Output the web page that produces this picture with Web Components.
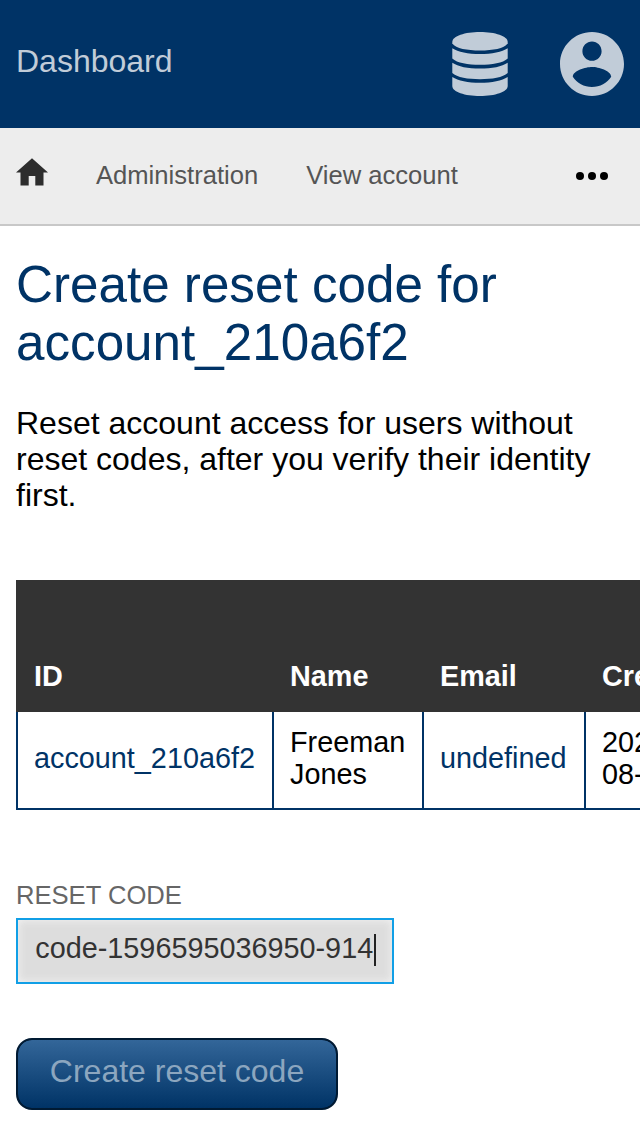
<!DOCTYPE html>
<html lang="en">
<head>
<meta charset="utf-8">
<title>Create reset code</title>
<style>
html,body{margin:0;height:100%}
body{background:#fff;color:#000;font-family:"Liberation Sans",Arial,sans-serif;overflow:hidden}
</style>
</head>
<body>
<account-page></account-page>
<script>
const define = (name, html) => {
  const template = document.createElement('template');
  template.innerHTML = html;
  customElements.define(name, class extends HTMLElement {
    constructor() {
      super();
      this.attachShadow({mode: 'open'}).append(template.content.cloneNode(true));
    }
  });
};

define('app-header', `
<style>
:host{display:flex;align-items:center;height:128px;box-sizing:border-box;padding:0 16px;background:#036;color:#c1ccd8;font-size:32px}
.title{flex:1;line-height:36px;padding-bottom:6px}
svg{display:block;fill:#c1ccd8}
.db{margin-right:52px}
</style>
<div class="title"><slot></slot></div>
<svg class="db" width="56" height="64" viewBox="0 0 56 64">
<path d="M.3 10C.3 4 13 0 28 0S55.700 4 55.700 10V11.500C52 16.500 41 18.500 28 18.500S4 16.500.3 11.500z"/>
<path d="M.3 16.200C6 20 16 22 28 22S50 20 55.700 16.200V26.500C51 31 40 32.800 28 32.800S5 31 .3 26.500z"/>
<path d="M.3 30.700C6 34.600 16 36.600 28 36.600S50 34.600 55.700 30.700V41C51 45.500 40 47.200 28 47.200S5 45.500 .3 41z"/>
<path d="M.3 45C6 48.900 16 50.800 28 50.800S50 48.900 55.700 45V54C55.700 60 43 64 28 64S.3 60 .3 54z"/>
</svg>
<svg width="64" height="64" viewBox="2 2 20 20"><path d="M12 2C6.480 2 2 6.480 2 12s4.480 10 10 10 10-4.480 10-10S17.520 2 12 2zm0 3c1.660 0 3 1.340 3 3s-1.340 3-3 3-3-1.340-3-3 1.340-3 3-3zm0 14.200c-2.500 0-4.710-1.280-6-3.220.03-1.990 4-3.080 6-3.080 1.990 0 5.970 1.090 6 3.080-1.290 1.940-3.500 3.220-6 3.220z"/></svg>
`);

define('nav-bar', `
<style>
:host{display:flex;align-items:center;height:98px;box-sizing:border-box;padding:0 32px 0 16px;background:#ededed;border-bottom:2px solid #c8c8c8;color:#555;font-size:25.6px}
.home{margin:0 48px 8px 0;fill:#2d2d2d}
.links{display:flex;gap:48px;flex:1;line-height:30px;padding-bottom:2px}
svg{display:block}
</style>
<svg class="home" width="32" height="28" viewBox="0 0 32 28"><path d="M16 .3 32 14.500H27.500V27.600H19.300V18H12.700V27.600H4.500V14.500H0z"/></svg>
<div class="links"><slot></slot></div>
<svg width="32" height="8" viewBox="0 0 32 8"><circle cx="4" cy="4" r="4"/><circle cx="16" cy="4" r="4"/><circle cx="28" cy="4" r="4"/></svg>
`);

define('page-intro', `
<style>
:host{display:block}
h1{margin:0;color:#036;font-weight:400;font-size:51.2px;line-height:58px}
p{margin:33px 0 0;font-size:32px;line-height:36px}
</style>
<h1><slot name="heading"></slot></h1>
<p><slot></slot></p>
`);

define('account-table', `
<style>
:host{display:block;overflow:hidden;margin-right:-16px}
table{border-collapse:separate;border-spacing:0;table-layout:fixed;width:800px;font-size:28.8px;line-height:32px;text-align:left}
th{height:132px;box-sizing:border-box;background:#333;color:#fff;padding:0 16px 20px 18px;vertical-align:bottom}
td{height:98px;box-sizing:border-box;border-left:2px solid #036;border-bottom:2px solid #036;padding:0 16px;vertical-align:middle}
td span{display:block;padding-bottom:4px}
.link{color:#036}
</style>
<table>
<colgroup><col style="width:256px"><col style="width:150px"><col style="width:162px"><col style="width:232px"></colgroup>
<tr><th>ID</th><th>Name</th><th>Email</th><th>Created</th></tr>
<tr><td class="link"><span>account_210a6f2</span></td><td><span>Freeman<br>Jones</span></td><td class="link"><span>undefined</span></td><td><span>2020-<br>08-05</span></td></tr>
</table>
`);

define('code-field', `
<style>
:host{display:block}
.label{color:#666;font-size:25.6px;line-height:30px;text-transform:uppercase}
.input{display:flex;align-items:center;margin-top:8px;box-sizing:border-box;width:378px;height:66px;padding:0 0 0 17.3px;border:2px solid #119fe6;background:#ddd;box-shadow:inset 0 0 8px #f4f4f4;color:#333;font-size:28.8px}
.value{line-height:32px;padding-bottom:6px}
.caret{width:2px;height:32px;margin:0 0 2px .7px;background:#222}
</style>
<div class="label"><slot name="label"></slot></div>
<div class="input"><span class="value"><slot></slot></span><i class="caret"></i></div>
`);

define('submit-button', `
<style>
:host{display:flex;align-items:center;justify-content:center;box-sizing:border-box;width:322px;height:72px;padding-bottom:6px;border:2px solid #001a33;border-radius:16px;background:linear-gradient(#369,#036) padding-box,#001a33 border-box;color:#8ca6bf;font-size:32px;line-height:36px}
</style>
<slot></slot>
`);

define('account-page', `
<style>
:host{display:block}
main{padding:30px 16px 0}
account-table{margin-top:67px}
code-field{margin-top:70px}
submit-button{margin-top:54px}
</style>
<app-header>Dashboard</app-header>
<nav-bar><span>Administration</span><span>View account</span></nav-bar>
<main>
<page-intro><span slot="heading">Create reset code for account_210a6f2</span>Reset account access for users without reset codes, after you verify their identity first.</page-intro>
<account-table></account-table>
<code-field><span slot="label">Reset code</span>code-1596595036950-914</code-field>
<submit-button>Create reset code</submit-button>
</main>
`);
</script>
</body>
</html>
